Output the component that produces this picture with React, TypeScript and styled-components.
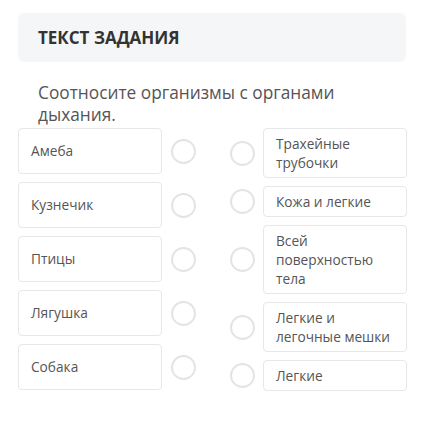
import React from 'react';
import styled, { createGlobalStyle } from 'styled-components';

const GlobalStyle = createGlobalStyle`
  html, body {
    margin: 0;
    padding: 0;
    background: #ffffff;
  }
  body {
    font-family: "Open Sans", "Noto Sans", sans-serif;
  }
  * {
    box-sizing: border-box;
  }
`;

const Page = styled.div`
  width: 426px;
  padding: 13px 20px 40px 18px;
`;

const Header = styled.div`
  height: 49px;
  display: flex;
  align-items: center;
  padding: 0 20px;
  background: #f5f6f8;
  border-radius: 6px;
`;

const HeaderTitle = styled.h2`
  margin: 0;
  font-size: 17px;
  font-weight: 700;
  color: #333333;
  text-transform: uppercase;
`;

const Description = styled.p`
  margin: 20px 0 2px;
  padding: 0 20px;
  font-size: 17.3px;
  line-height: 22px;
  color: #555555;
`;

const Matcher = styled.div`
  display: flex;
  align-items: flex-start;
  gap: 34px;
`;

const Column = styled.div`
  display: flex;
  flex-direction: column;
  gap: 8px;
`;

const Item = styled.div<{ $reverse?: boolean }>`
  display: flex;
  flex-direction: ${(p) => (p.$reverse ? 'row-reverse' : 'row')};
  align-items: center;
  gap: ${(p) => (p.$reverse ? '8px' : '9px')};
`;

const Card = styled.div<{ $tall?: boolean }>`
  width: 144px;
  display: flex;
  align-items: center;
  padding: ${(p) => (p.$tall ? '13px 12px' : '5px 12px')};
  border: 1px solid #e6e7e9;
  border-radius: 4px;
  font-size: 13.7px;
  line-height: ${(p) => (p.$tall ? '18px' : '19px')};
  color: #555555;
`;

const Radio = styled.span`
  flex: none;
  width: 25px;
  height: 25px;
  border-radius: 50%;
  border: 2px solid #e3e4e6;
  background: #ffffff;
`;

const organisms = ['Амеба', 'Кузнечик', 'Птицы', 'Лягушка', 'Собака'];
const organs = [
  'Трахейные трубочки',
  'Кожа и легкие',
  'Всей поверхностью тела',
  'Легкие и легочные мешки',
  'Легкие',
];

export default function App() {
  return (
    <>
      <GlobalStyle />
      <Page>
        <Header>
          <HeaderTitle>Текст задания</HeaderTitle>
        </Header>
        <Description>Соотносите организмы с органами дыхания.</Description>
        <Matcher>
          <Column>
            {organisms.map((name) => (
              <Item key={name}>
                <Card $tall>{name}</Card>
                <Radio />
              </Item>
            ))}
          </Column>
          <Column>
            {organs.map((name) => (
              <Item key={name} $reverse>
                <Card>{name}</Card>
                <Radio />
              </Item>
            ))}
          </Column>
        </Matcher>
      </Page>
    </>
  );
}
